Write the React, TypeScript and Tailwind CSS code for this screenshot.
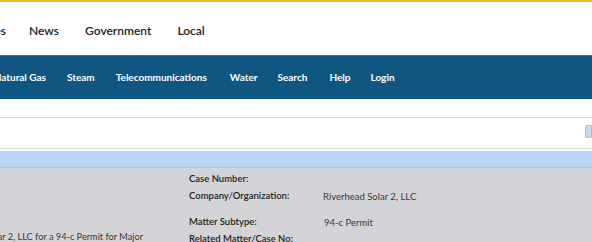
import React from "react";

export default function App() {
  const font = { fontFamily: 'Lato, "Noto Sans", "Liberation Sans", sans-serif' };
  return (
    <div className="w-[592px] h-[242px] overflow-hidden bg-white" style={font}>
      <div className="h-[2px] bg-[#ecbc2c]" />
      <div className="h-[53px] flex items-center text-[12px] font-semibold text-[#222] pt-[4px]">
        <div className="w-[6px] flex justify-end whitespace-nowrap">Businesses</div>
        <div className="ml-[23px]">News</div>
        <div className="ml-[26px]">Government</div>
        <div className="ml-[26px]">Local</div>
      </div>
      <div className="h-[44px] bg-[#0f5782] border-t border-[#2a7a8c] flex items-center text-[10px] font-bold text-white">
        <div className="w-[46px] flex justify-end whitespace-nowrap">Natural Gas</div>
        <div className="ml-[21px]">Steam</div>
        <div className="ml-[21px]">Telecommunications</div>
        <div className="ml-[23px]">Water</div>
        <div className="ml-[20px]">Search</div>
        <div className="ml-[22px]">Help</div>
        <div className="ml-[20px]">Login</div>
      </div>
      <div className="h-[18px]" />
      <div className="h-[31px] border-t border-[#d8d8d8] flex items-start justify-end">
        <div className="mt-[7px] w-[7px] h-[13px] bg-[#c9d9ee] border border-[#a9bfd9] rounded-l-[2px]" />
      </div>
      <div className="h-[3px] border-t border-[#e2e2e2]" />
      <div className="h-[17px] bg-[#b7d7f7] border-b border-[#a9c6e2]" />
      <div className="bg-[#d4d3d7] h-[80px] flex">
        <div className="w-[189px] relative">
          <div className="absolute left-0 top-[62px] w-[143px] flex justify-end whitespace-nowrap text-[9.2px] text-[#3a3a3a]">
            Application of Riverhead Solar 2, LLC for a 94-c Permit for Major
          </div>
        </div>
        <div className="w-[134px] flex flex-col pt-[2px] text-[9.5px] font-semibold text-[#1e1e1e]">
          <div className="h-[18px] flex items-center">Case Number:</div>
          <div className="h-[18px] flex items-center">Company/Organization:</div>
          <div className="h-[8px]" />
          <div className="h-[18px] flex items-center">Matter Subtype:</div>
          <div className="h-[18px] flex items-center">Related Matter/Case No:</div>
        </div>
        <div className="flex flex-col pt-[2px] text-[9.5px] text-[#3a3a3a]">
          <div className="h-[18px]" />
          <div className="h-[18px] flex items-center">Riverhead Solar 2, LLC</div>
          <div className="h-[8px]" />
          <div className="h-[18px] flex items-center pl-[1px]">94-c Permit</div>
        </div>
      </div>
    </div>
  );
}
